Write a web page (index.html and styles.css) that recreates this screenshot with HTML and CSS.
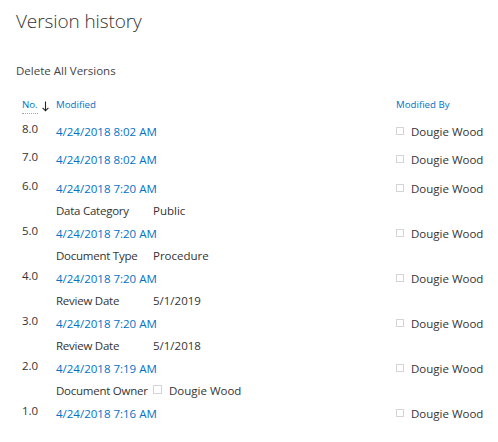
FILE: index.html
```html
<!DOCTYPE html>
<html lang="en">
<head>
<meta charset="utf-8">
<title>Version history</title>
<link rel="stylesheet" href="styles.css">
</head>
<body>
<h1 class="title">Version history</h1>
<div class="actions"><span class="delete">Delete All Versions</span></div>
<div class="table">
  <div class="head">
    <span class="h-no"><span class="h-no-text">No.</span><svg class="arrow" width="7" height="11" viewBox="0 0 7 11"><path d="M3.5 0.5V9.8M0.6 6.8L3.5 9.8L6.4 6.8" fill="none" stroke="#222" stroke-width="1.1"/></svg></span>
    <span class="h-link">Modified</span>
    <span class="h-link">Modified By</span>
  </div>

  <div class="ver plain">
    <div class="row"><span class="num">8.0</span><span class="date">4/24/2018 8:02 AM</span><span class="by"><i class="cb"></i>Dougie Wood</span></div>
  </div>
  <div class="ver plain">
    <div class="row"><span class="num">7.0</span><span class="date">4/24/2018 8:02 AM</span><span class="by"><i class="cb"></i>Dougie Wood</span></div>
  </div>
  <div class="ver">
    <div class="row"><span class="num">6.0</span><span class="date">4/24/2018 7:20 AM</span><span class="by"><i class="cb"></i>Dougie Wood</span></div>
    <div class="detail"><span class="label">Data Category</span><span class="value">Public</span></div>
  </div>
  <div class="ver">
    <div class="row"><span class="num">5.0</span><span class="date">4/24/2018 7:20 AM</span><span class="by"><i class="cb"></i>Dougie Wood</span></div>
    <div class="detail"><span class="label">Document Type</span><span class="value">Procedure</span></div>
  </div>
  <div class="ver">
    <div class="row"><span class="num">4.0</span><span class="date">4/24/2018 7:20 AM</span><span class="by"><i class="cb"></i>Dougie Wood</span></div>
    <div class="detail"><span class="label">Review Date</span><span class="value">5/1/2019</span></div>
  </div>
  <div class="ver">
    <div class="row"><span class="num">3.0</span><span class="date">4/24/2018 7:20 AM</span><span class="by"><i class="cb"></i>Dougie Wood</span></div>
    <div class="detail"><span class="label">Review Date</span><span class="value">5/1/2018</span></div>
  </div>
  <div class="ver">
    <div class="row"><span class="num">2.0</span><span class="date">4/24/2018 7:19 AM</span><span class="by"><i class="cb"></i>Dougie Wood</span></div>
    <div class="detail"><span class="label">Document Owner</span><span class="value"><i class="cb cb-owner"></i>Dougie Wood</span></div>
  </div>
  <div class="ver plain">
    <div class="row"><span class="num">1.0</span><span class="date">4/24/2018 7:16 AM</span><span class="by"><i class="cb"></i>Dougie Wood</span></div>
  </div>
</div>
</body>
</html>
```

FILE: styles.css
```css
html, body {
  margin: 0;
  padding: 0;
  background: #ffffff;
}
body {
  font-family: "Open Sans", "Noto Sans", "DejaVu Sans", sans-serif;
  font-size: 11.5px;
  color: #333333;
  padding: 0 0 0 16px;
}
.title {
  margin: 8px 0 0 0;
  font-size: 19px;
  font-weight: 300;
  line-height: 26px;
  color: #333333;
  letter-spacing: -0.1px;
}
.actions {
  margin-top: 29px;
  line-height: 16px;
  color: #444444;
}
.table {
  margin-top: 19px;
}
.head {
  display: grid;
  grid-template-columns: 40px 340px 1fr;
  font-size: 9.7px;
  line-height: 14px;
  height: 14px;
  margin-bottom: 8.75px;
  color: #0072c6;
  white-space: nowrap;
}
.h-no {
  padding-left: 6px;
  display: flex;
  align-items: flex-start;
}
.h-no-text {
  display: inline-block;
  height: 15px;
  border-bottom: 1px dotted #a6a6a6;
}
.arrow {
  margin-left: 4px;
  margin-top: 3px;
}
.ver.plain {
  padding-bottom: 6px;
}
.row {
  display: grid;
  grid-template-columns: 40px 340px 1fr;
  align-items: start;
  line-height: 22.5px;
  white-space: nowrap;
}
.num {
  padding-left: 6px;
  line-height: 16px;
  color: #333333;
}
.date {
  color: #0072c6;
}
.by {
  color: #333333;
}
.cb {
  display: inline-block;
  box-sizing: border-box;
  width: 8px;
  height: 8px;
  border: 1px solid #d4d4d4;
  margin-right: 7px;
  margin-bottom: 1px;
  vertical-align: baseline;
}
.detail {
  display: flex;
  padding-left: 40px;
  line-height: 22.5px;
  color: #333333;
  white-space: nowrap;
}
.label {
  width: 97px;
  flex: none;
  letter-spacing: -0.25px;
}
.cb-owner {
  width: 9px;
  height: 9px;
  margin-right: 7px;
}
```
